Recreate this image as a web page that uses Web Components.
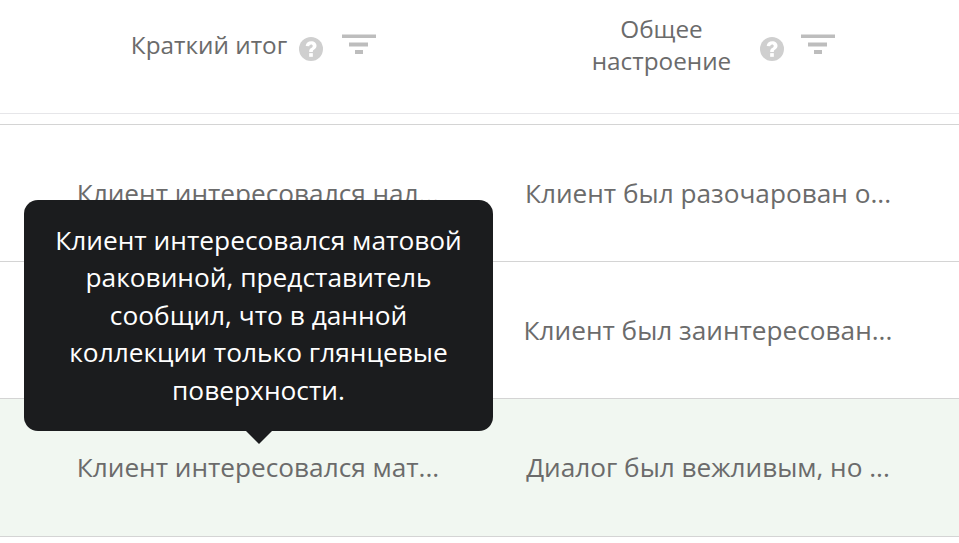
<!DOCTYPE html>
<html lang="ru">
<head>
<meta charset="utf-8">
<title>Таблица</title>
<style>
	html, body {
		margin: 0;
		height: 100%;
		overflow: hidden;
		background: #fff;
	}

	body {
		font-family: "Open Sans", sans-serif;
		font-size: 24px;
		color: #666;
	}
</style>
</head>
<body>
<chat-table>
	<head-row slot="head">
		<head-cell>Краткий итог</head-cell>
		<head-cell class="wrap">Общее настроение</head-cell>
	</head-row>
	<table-row>
		<span>Клиент интересовался нал...</span>
		<span>Клиент был разочарован о...</span>
	</table-row>
	<table-row>
		<span>Клиент интересовался мат...</span>
		<span>Клиент был заинтересован...</span>
	</table-row>
	<table-row active>
		<span>Клиент интересовался мат...</span>
		<span>Диалог был вежливым, но ...</span>
	</table-row>
	<hover-tip slot="overlay">Клиент интересовался матовой раковиной, представитель сообщил, что в данной коллекции только глянцевые поверхности.</hover-tip>
</chat-table>

<script>
class ChatTable extends HTMLElement {
	constructor() {
		super();
		this.attachShadow({ mode: "open" });
		this.shadowRoot.innerHTML = `
<style>
	:host {
		display: block;
		position: relative;
		width: 959px;
	}

	.gap {
		height: 10px;
	}
</style>
<slot name="head"></slot>
<div class="gap"></div>
<slot></slot>
<slot name="overlay"></slot>`;
	}
}

class HeadRow extends HTMLElement {
	constructor() {
		super();
		this.attachShadow({ mode: "open" });
		this.shadowRoot.innerHTML = `
<style>
	:host {
		display: grid;
		grid-template-columns: 450px 450px;
		padding-left: 33px;
		height: 113px;
		border-bottom: 1px solid #e6e6e9;
	}
</style>
<slot></slot>`;
	}
}

class HeadCell extends HTMLElement {
	constructor() {
		super();
		this.attachShadow({ mode: "open" });
		this.shadowRoot.innerHTML = `
<style>
	:host {
		display: flex;
		justify-content: center;
		align-items: center;
		box-sizing: border-box;
		height: 90px;
		padding-right: 9px;
		font-size: 24.300px;
		line-height: 32px;
		color: #6b6b6b;
		text-align: center;
	}

	:host(.wrap) {
		padding-right: 6px;
	}

	:host(.wrap) .title {
		width: 173px;
	}

	:host(.wrap) .help {
		margin-right: 17px;
	}

	.title {
		margin-right: 12px;
	}

	.help {
		width: 24px;
		height: 24px;
		margin: 8px 19px 0 0;
		flex: none;
	}

	.filter {
		width: 34px;
		height: 20px;
		margin-top: -2px;
		flex: none;
	}
</style>
<div class="title"><slot></slot></div>
<svg class="help" viewBox="0 0 24 24">
	<circle cx="12" cy="12" r="12" fill="#cfcfcf"/>
	<g transform="translate(12 12) scale(1.15) translate(-12 -12)">
		<path d="M7.400 9.400C7.600 6.800 9.500 5.200 12.200 5.200c2.700 0 4.600 1.600 4.600 3.900 0 1.600-.9 2.500-2 3.300-1 .7-1.200 1-1.200 2.100H10.400c0-1.800.5-2.500 1.600-3.300 1-.7 1.500-1.100 1.500-1.900 0-.8-.6-1.300-1.400-1.300-1 0-1.500.6-1.600 1.700z" fill="#fff"/>
		<rect x="10.400" y="15.600" width="3.200" height="3.200" fill="#fff"/>
	</g>
</svg>
<svg class="filter" viewBox="0 0 34 20">
	<rect x="0" y="0.500" width="34" height="3.500" fill="#bdbdbd"/>
	<rect x="7" y="8.500" width="19" height="4" fill="#bdbdbd"/>
	<rect x="13" y="16" width="8" height="4" fill="#bdbdbd"/>
</svg>`;
	}
}

class TableRow extends HTMLElement {
	constructor() {
		super();
		this.attachShadow({ mode: "open" });
		this.shadowRoot.innerHTML = `
<style>
	:host {
		display: grid;
		grid-template-columns: 450px 450px;
		padding-left: 33px;
		height: 136px;
		align-items: center;
		border-top: 1px solid #d4d4d4;
		color: #6b6b6b;
		font-size: 26.200px;
		line-height: 32px;
	}

	:host([active]) {
		padding-bottom: 1px;
		background: #f1f7f1;
		border-bottom: 1px solid #d4d4d4;
	}

	::slotted(span) {
		display: block;
		text-align: center;
		white-space: nowrap;
	}
</style>
<slot></slot>`;
	}
}

class HoverTip extends HTMLElement {
	constructor() {
		super();
		this.attachShadow({ mode: "open" });
		this.shadowRoot.innerHTML = `
<style>
	:host {
		position: absolute;
		left: 24px;
		top: 200px;
		width: 469px;
		height: 231px;
		box-sizing: border-box;
		padding: 21.500px 30px;
		background: #1b1c1e;
		border-radius: 14px;
		color: #fff;
		font-size: 26.300px;
		line-height: 37.500px;
		text-align: center;
	}

	:host::after {
		content: "";
		position: absolute;
		left: 222px;
		bottom: -13px;
		width: 0;
		height: 0;
		border-left: 13px solid transparent;
		border-right: 13px solid transparent;
		border-top: 13px solid #1b1c1e;
	}
</style>
<slot></slot>`;
	}
}

customElements.define("chat-table", ChatTable);
customElements.define("head-row", HeadRow);
customElements.define("head-cell", HeadCell);
customElements.define("table-row", TableRow);
customElements.define("hover-tip", HoverTip);
</script>
</body>
</html>
